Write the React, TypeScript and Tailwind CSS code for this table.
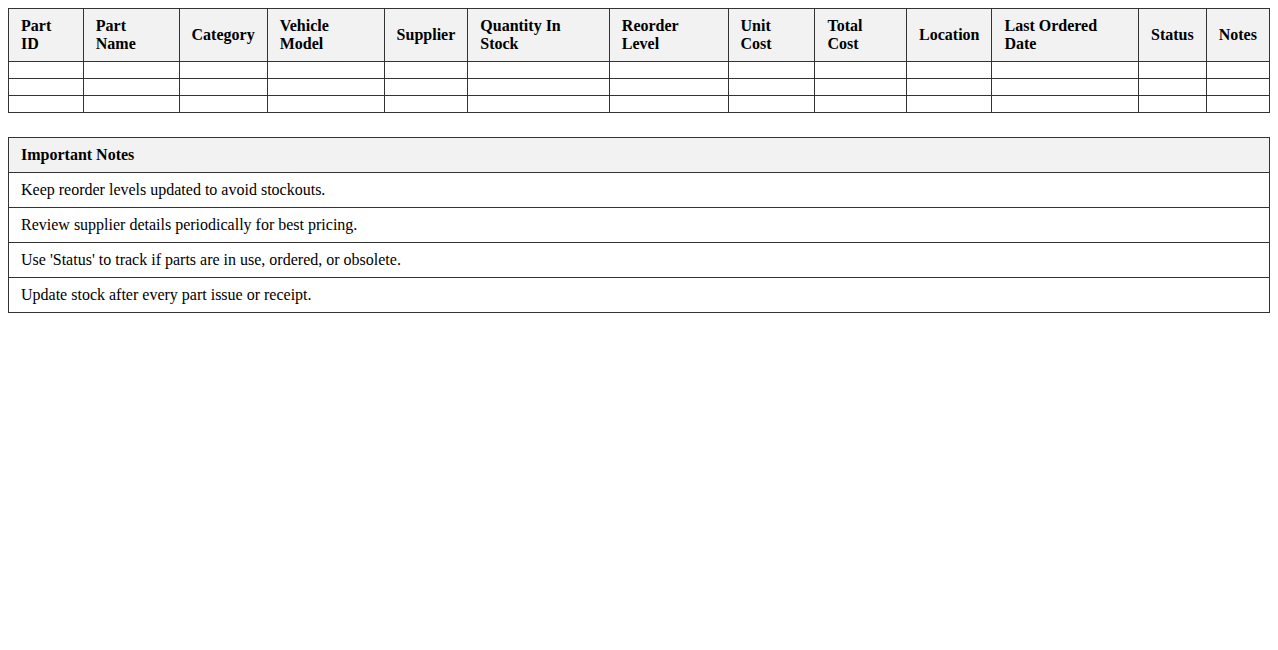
import React from "react";

const headers = [
  "Part ID",
  "Part Name",
  "Category",
  "Vehicle Model",
  "Supplier",
  "Quantity In Stock",
  "Reorder Level",
  "Unit Cost",
  "Total Cost",
  "Location",
  "Last Ordered Date",
  "Status",
  "Notes",
];

const notes = [
  "Keep reorder levels updated to avoid stockouts.",
  "Review supplier details periodically for best pricing.",
  "Use 'Status' to track if parts are in use, ordered, or obsolete.",
  "Update stock after every part issue or receipt.",
];

export default function App() {
  return (
    <div
      className="m-2 text-[16px] text-black bg-white"
      style={{ fontFamily: '"Liberation Serif", "Times New Roman", serif' }}
    >
      <table className="w-full border-collapse">
        <thead>
          <tr>
            {headers.map((h) => (
              <th
                key={h}
                className="border border-[#333] bg-[#f2f2f2] px-3 py-2 text-left font-bold leading-[18px] align-middle"
              >
                {h}
              </th>
            ))}
          </tr>
        </thead>
        <tbody>
          {[0, 1, 2].map((r) => (
            <tr key={r}>
              {headers.map((h) => (
                <td key={h} className="border border-[#333] px-3 py-2 leading-[18px]"></td>
              ))}
            </tr>
          ))}
        </tbody>
      </table>

      <table className="w-full border-collapse mt-6">
        <thead>
          <tr>
            <th className="border border-[#333] bg-[#f2f2f2] px-3 py-2 text-left font-bold leading-[18px]">
              Important Notes
            </th>
          </tr>
        </thead>
        <tbody>
          {notes.map((n) => (
            <tr key={n}>
              <td className="border border-[#333] px-3 py-2 leading-[18px]">{n}</td>
            </tr>
          ))}
        </tbody>
      </table>
    </div>
  );
}
